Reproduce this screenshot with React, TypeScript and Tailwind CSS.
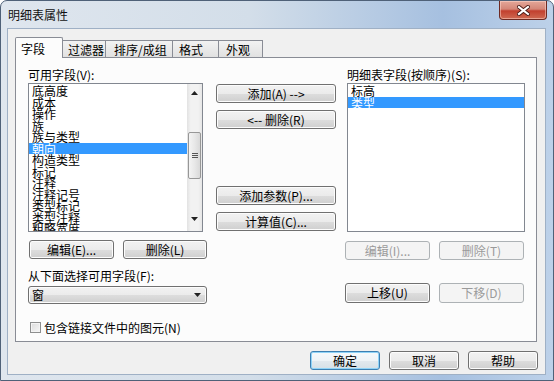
import React from "react";

type BtnProps = {
  children: React.ReactNode;
  className?: string;
  disabled?: boolean;
  def?: boolean;
};

function Btn({ children, className = "", disabled, def }: BtnProps) {
  let look =
    "border-[#707070] bg-[linear-gradient(to_bottom,#f2f2f2_0%,#ebebeb_50%,#dddddd_51%,#cfcfcf_100%)] shadow-[inset_0_0_0_1px_#fcfcfc] text-black";
  if (disabled) look = "border-[#adb2b5] bg-[#f4f4f4] text-[#9a9a9a]";
  if (def)
    look =
      "border-[#3c7fb1] bg-[linear-gradient(to_bottom,#f6f9fb_0%,#eef3f6_50%,#e2e9ee_51%,#d6e0e6_100%)] shadow-[inset_0_0_0_1px_#8fd3f7] text-black";
  return (
    <div
      className={`flex items-center justify-center rounded-[3px] border text-[12px] leading-[14px] whitespace-nowrap ${look} ${className}`}
    >
      {children}
    </div>
  );
}

function UpArrow() {
  return (
    <svg width="7" height="4" viewBox="0 0 7 4">
      <path d="M0 4 L3.5 0 L7 4 Z" fill="#222" />
    </svg>
  );
}
function DownArrow() {
  return (
    <svg width="7" height="4" viewBox="0 0 7 4">
      <path d="M0 0 L7 0 L3.5 4 Z" fill="#222" />
    </svg>
  );
}

const leftItems = [
  "底高度",
  "成本",
  "操作",
  "族",
  "族与类型",
  "朝向",
  "构造类型",
  "标记",
  "注释",
  "注释记号",
  "类型标记",
  "类型注释",
  "粗略宽度",
];

export default function App() {
  return (
    <div className="w-[554px] h-[381px] flex flex-col rounded-t-[7px] border border-[#4f6178] bg-[linear-gradient(to_right,#dfe6ee_0%,#d3dee9_45%,#a6c0e0_80%,#bdd1e9_100%)] overflow-hidden font-['Noto_Sans_CJK_SC',sans-serif] text-black">
      {/* Title bar */}
      <div className="h-[27px] flex items-start shrink-0">
        <span className="ml-[7px] mt-[7px] text-[12px] leading-[14px] text-[#111]">明细表属性</span>
        <div className="ml-auto mr-[6px] w-[48px] h-[19px] flex items-center justify-center rounded-b-[4px] border border-t-0 border-[#6e2a22] bg-[linear-gradient(to_bottom,#e4a799_0%,#d48677_45%,#c2402e_55%,#cf6a52_100%)] shadow-[inset_0_0_0_1px_rgba(255,220,210,0.5)]">
          <svg width="13" height="11" viewBox="0 0 13 11">
            <path d="M2 2 L11 9 M11 2 L2 9" stroke="#4a1a15" strokeWidth="4" strokeLinecap="square" />
            <path d="M2 2 L11 9 M11 2 L2 9" stroke="#ffffff" strokeWidth="2.2" strokeLinecap="square" />
          </svg>
        </div>
      </div>

      {/* Client area */}
      <div className="ml-[6px] mr-[7px] mb-[5px] flex-1 border border-[#9fb0c5] bg-[#f0f0f0] flex flex-col">
        <div className="pt-[8px] pl-[7px]">
          {/* Tabs */}
          <div className="flex items-end h-[20px] text-[12px] leading-[14px]">
            <div className="relative z-10 -mb-px w-[48px] h-[21px] border border-b-0 border-[#898c95] bg-[#fcfcfc] rounded-t-[2px] pl-[5px] pt-[4px]">
              字段
            </div>
            <div className="w-[43px] h-[17px] border-t border-r border-[#898c95] bg-[linear-gradient(to_bottom,#f2f2f2,#e1e1e1)] pl-[5px] pt-[2px]">
              过滤器
            </div>
            <div className="w-[67px] h-[17px] border-t border-r border-[#898c95] bg-[linear-gradient(to_bottom,#f2f2f2,#e1e1e1)] pl-[8px] pt-[2px]">
              排序/成组
            </div>
            <div className="w-[46px] h-[17px] border-t border-r border-[#898c95] bg-[linear-gradient(to_bottom,#f2f2f2,#e1e1e1)] pl-[6px] pt-[2px]">
              格式
            </div>
            <div className="w-[44px] h-[17px] border-t border-r border-[#898c95] bg-[linear-gradient(to_bottom,#f2f2f2,#e1e1e1)] pl-[7px] pt-[2px]">
              外观
            </div>
          </div>

          {/* Panel */}
          <div className="w-[522px] h-[285px] border border-[#898c95] bg-[#fcfcfc] flex text-[12px]">
            {/* Left column */}
            <div className="ml-[12px] w-[179px] pt-[9px] flex flex-col">
              <div className="h-[16px] leading-[16px]">可用字段(V):</div>
              <div className="w-[175px] h-[149px] border border-[#828790] bg-white flex overflow-hidden">
                <div className="flex-1 pt-px overflow-hidden">
                  {leftItems.map((t) => (
                    <div
                      key={t}
                      className={`h-[11.5px] leading-[11.5px] pl-[3px] whitespace-nowrap ${
                        t === "朝向" ? "bg-[#3399ff] text-white" : ""
                      }`}
                    >
                      {t}
                    </div>
                  ))}
                </div>
                <div className="w-[15px] h-full flex flex-col bg-[linear-gradient(to_right,#e2e2e2,#f2f2f2_25%,#f2f2f2_75%,#e6e6e6)]">
                  <div className="h-[15px] flex items-center justify-center pt-[2px]">
                    <UpArrow />
                  </div>
                  <div className="h-[33px]" />
                  <div className="mx-px h-[47px] rounded-[2px] border border-[#979797] bg-[linear-gradient(to_right,#f4f4f4,#e8e8e8_50%,#d9d9d9)] flex flex-col items-center justify-center gap-[1px]">
                    <div className="w-[6px] h-px bg-[#555]" />
                    <div className="w-[6px] h-px bg-[#555]" />
                    <div className="w-[6px] h-px bg-[#555]" />
                  </div>
                  <div className="flex-1" />
                  <div className="h-[17px] flex items-start justify-center pt-[3px]">
                    <DownArrow />
                  </div>
                </div>
              </div>
              <div className="mt-[8px] flex">
                <Btn className="ml-px w-[85px] h-[19px]">编辑(E)...</Btn>
                <Btn className="ml-[9px] w-[84px] h-[19px]">删除(L)</Btn>
              </div>
              <div className="mt-[9px] h-[15px] leading-[15px]">从下面选择可用字段(F):</div>
              <div className="mt-[3px] w-[179px] h-[18px] rounded-[3px] border border-[#707070] bg-[linear-gradient(to_bottom,#f2f2f2_0%,#ebebeb_50%,#dddddd_51%,#cfcfcf_100%)] shadow-[inset_0_0_0_1px_#fcfcfc] flex items-center pl-[3px] pr-[5px]">
                <span className="leading-[14px]">窗</span>
                <span className="ml-auto flex">
                  <DownArrow />
                </span>
              </div>
              <div className="mt-[17px] h-[13px] flex items-center">
                <div className="ml-[2px] w-[11px] h-[11px] border border-[#8e8f8f] bg-[linear-gradient(to_bottom_right,#dcdcdc,#f7f7f7)] shadow-[inset_0_0_0_1px_#f4f4f4]" />
                <span className="ml-[3px] leading-[13px]">包含链接文件中的图元(N)</span>
              </div>
            </div>

            {/* Middle column */}
            <div className="ml-[9px] w-[120px] flex flex-col">
              <Btn className="mt-[26px] w-[120px] h-[19px]">添加(A) --&gt;</Btn>
              <Btn className="mt-[7px] w-[120px] h-[19px]">&lt;-- 删除(R)</Btn>
              <Btn className="mt-[57px] w-[120px] h-[19px]">添加参数(P)...</Btn>
              <Btn className="mt-[7px] w-[120px] h-[19px]">计算值(C)...</Btn>
            </div>

            {/* Right column */}
            <div className="ml-[9px] w-[180px] pt-[9px] flex flex-col">
              <div className="ml-[2px] h-[16px] leading-[16px]">明细表字段(按顺序)(S):</div>
              <div className="ml-[2px] w-[178px] h-[149px] border border-[#828790] bg-white pt-px overflow-hidden">
                <div className="h-[11.5px] leading-[11.5px] pl-[3px]">标高</div>
                <div className="h-[11.5px] leading-[11.5px] pl-[3px] bg-[#3399ff] text-white">类型</div>
              </div>
              <div className="mt-[9px] flex">
                <Btn disabled className="w-[85px] h-[19px]">编辑(I)...</Btn>
                <Btn disabled className="ml-[9px] w-[85px] h-[19px]">删除(T)</Btn>
              </div>
              <div className="mt-[23px] flex">
                <Btn className="w-[85px] h-[20px]">上移(U)</Btn>
                <Btn disabled className="ml-[9px] w-[85px] h-[20px]">下移(D)</Btn>
              </div>
            </div>
          </div>
        </div>

        {/* Bottom buttons */}
        <div className="mt-[9px] pr-[7px] flex justify-end gap-[9px]">
          <Btn def className="w-[70px] h-[19px]">确定</Btn>
          <Btn className="w-[70px] h-[19px]">取消</Btn>
          <Btn className="w-[70px] h-[19px]">帮助</Btn>
        </div>
      </div>
    </div>
  );
}
